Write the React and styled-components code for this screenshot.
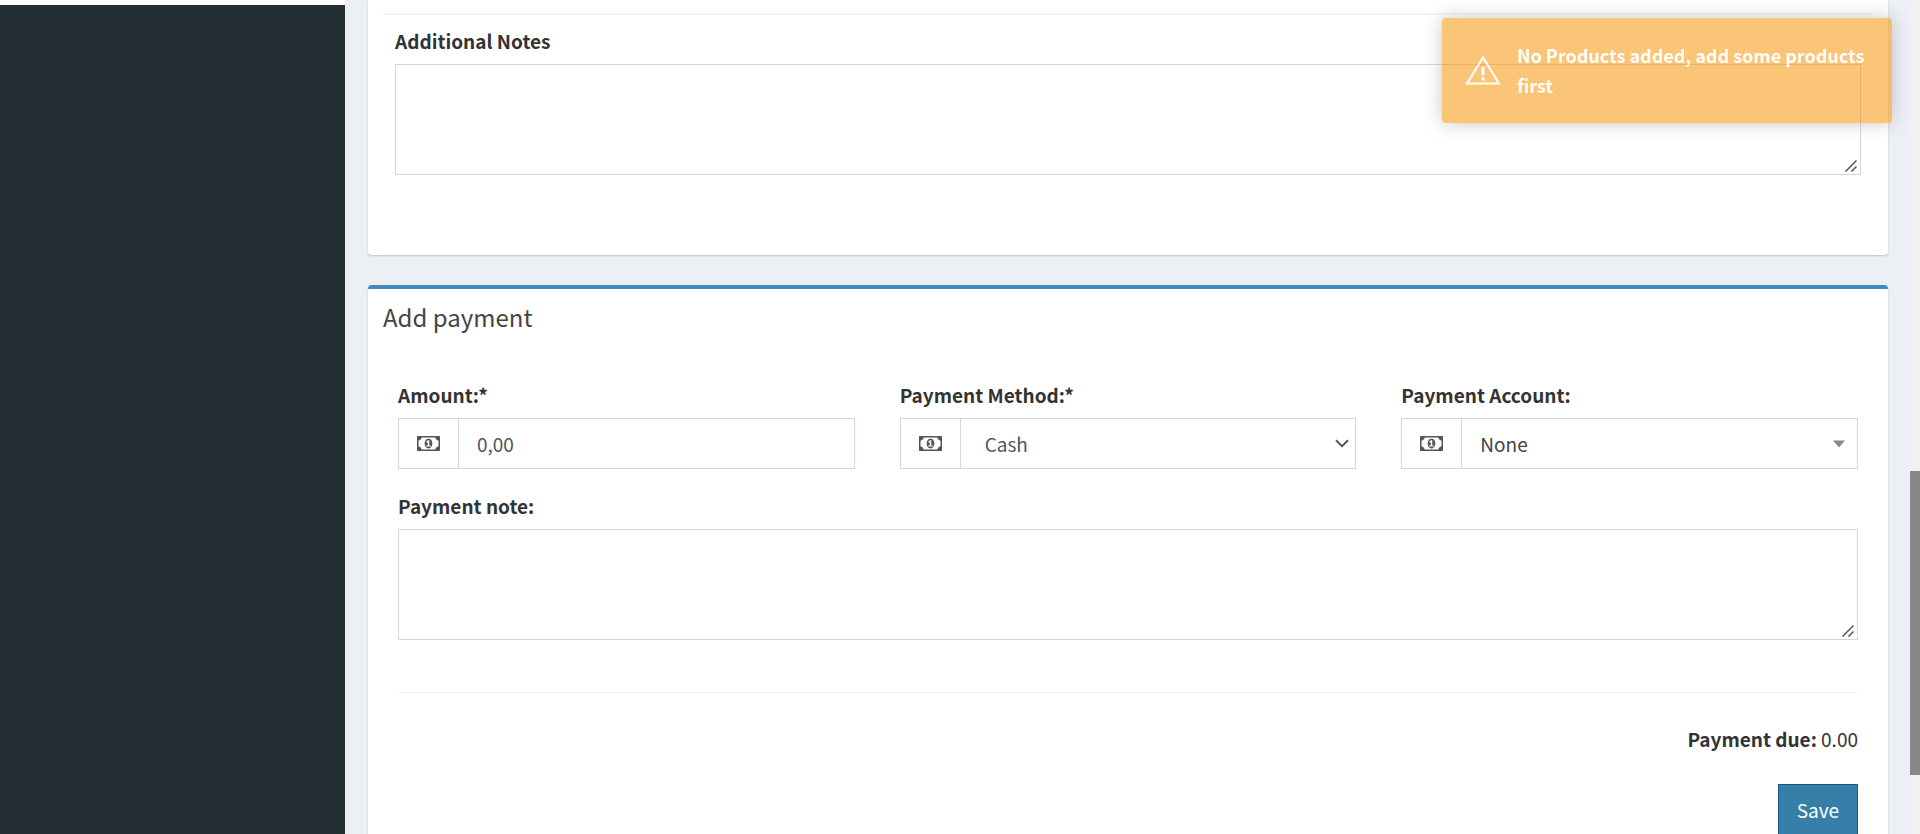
import React from "react";
import styled, { createGlobalStyle } from "styled-components";

const GlobalStyle = createGlobalStyle`
  *, *::before, *::after { box-sizing: border-box; }
  html, body { margin: 0; height: 100%; overflow: hidden; }
  #root { height: 100%; }
  body, button, input, select, textarea {
    font-family: "Noto Sans CJK SC", "Noto Sans", sans-serif;
    font-size: 19px;
    line-height: 28px;
    color: #333;
  }
`;

const Page = styled.div`
  display: flex;
  height: 100%;
  background: #ecf0f5;
`;

const Sidebar = styled.aside`
  flex: 0 0 345px;
  background: #222d32;
  border-top: 5px solid #fff;
`;

const Content = styled.main`
  flex: 1;
  min-width: 0;
  padding: 0 22px 0 23px;
  overflow: hidden;
  display: flex;
  flex-direction: column;
  gap: 30px;
`;

const Box = styled.section`
  flex: none;
  background: #fff;
  border-top: ${(p) => (p.$accent ? "4px solid #3c8dbc" : "0")};
  border-radius: ${(p) => (p.$accent ? "4px" : "0 0 4px 4px")};
  box-shadow: 0 1px 2px rgba(0, 0, 0, 0.2);
`;

const NotesBody = styled.div`
  margin: 0 15px;
  padding: 13px 0 80px;
`;

const NotesField = styled.div`
  border-top: 2px solid #f4f4f4;
  padding: 12px 12px 0;
`;

const Label = styled.label`
  display: block;
  font-weight: 700;
  margin-bottom: 9px;
`;

const TextAreaWrap = styled.div`
  position: relative;

  & > svg {
    position: absolute;
    right: 4px;
    bottom: 3px;
    pointer-events: none;
  }
`;

const TextArea = styled.textarea`
  display: block;
  width: 100%;
  height: 111px;
  padding: 9px 18px;
  border: 1px solid #d2d6de;
  background: #fff;
  outline: none;
  resize: vertical;

  &::-webkit-resizer { background: transparent; }
`;

const BoxTitle = styled.h3`
  margin: 0;
  padding: 13px 15px 15px;
  font-size: 24px;
  line-height: 30px;
  font-weight: 400;
  color: #444;
`;

const PaymentBody = styled.div`
  padding: 34px 30px 30px;
`;

const Columns = styled.div`
  display: grid;
  grid-template-columns: repeat(3, 1fr);
  column-gap: 45px;
  margin-bottom: 23px;
`;

const InputGroup = styled.div`
  display: flex;
  height: 51px;
  border: 1px solid #d2d6de;
`;

const Addon = styled.span`
  flex: 0 0 60px;
  display: grid;
  place-items: center;
  color: #555;
  border-right: 1px solid #d2d6de;
`;

const TextInput = styled.input`
  flex: 1;
  min-width: 0;
  padding: 0 18px;
  border: 0;
  outline: none;
  background: transparent;
  color: #555;
`;

const SelectWrap = styled.div`
  flex: 1;
  min-width: 0;
  display: grid;
  align-items: center;

  & > * { grid-area: 1 / 1; }
  & > svg { justify-self: end; margin-right: ${(p) => p.$arrowGap}px; pointer-events: none; }
`;

const Select = styled.select`
  appearance: none;
  width: 100%;
  height: 100%;
  padding: 0 ${(p) => p.$pad}px;
  border: 0;
  outline: none;
  background: transparent;
  color: ${(p) => p.$color};
`;

const Divider = styled.hr`
  margin: 52px 0 32px;
  border: 0;
  border-top: 1px solid #eee;
`;

const Due = styled.p`
  margin: 0 0 31px;
  text-align: right;
`;

const Actions = styled.div`
  display: flex;
  justify-content: flex-end;
`;

const SaveButton = styled.button`
  height: 51px;
  padding: 0 18px;
  border: 1px solid #1f567c;
  background: #367fa9;
  color: #fff;
`;

const ScrollTrack = styled.div`
  flex: 0 0 10px;
  display: flex;
  flex-direction: column;
  background: #f1f1f1;
`;

const ScrollSpace = styled.div`
  flex: ${(p) => p.$grow} 0 0;
`;

const ScrollThumb = styled.div`
  flex: 304 0 0;
  background: #888;
`;

const Toast = styled.div`
  position: fixed;
  top: 18px;
  right: 28px;
  width: 450px;
  padding: 22px 15px 23px 23px;
  display: flex;
  align-items: center;
  gap: 16px;
  border-radius: 4px;
  background: #f89406;
  box-shadow: 0 0 18px #999;
  color: #fff;
  font-size: 18px;
  line-height: 30px;
  font-weight: 700;
  opacity: 0.54;

  & > svg { flex: none; }
`;

const MoneyIcon = () => (
  <svg width="23" height="15" viewBox="0 0 1920 1280" preserveAspectRatio="none" fill="currentColor" aria-hidden="true">
    <path
      transform="matrix(1 0 0 -1 0 1280)"
      d="M768 384h384v96h-128v448h-114l-148 -137l77 -80q42 37 55 57h2v-288h-128v-96zM1280 640q0 -70 -21 -142t-59.5 -134t-101.5 -101t-138 -39t-138 39t-101.5 101t-59.5 134t-21 142t21 142t59.5 134t101.5 101t138 39t138 -39t101.5 -101t59.5 -134t21 -142zM1792 384v512q-106 0 -181 75t-75 181h-1152q0 -106 -75 -181t-181 -75v-512q106 0 181 -75t75 -181h1152q0 106 75 181t181 75zM1920 1216v-1152q0 -26 -19 -45t-45 -19h-1792q-26 0 -45 19t-19 45v1152q0 26 19 45t45 19h1792q26 0 45 -19t19 -45z"
    />
  </svg>
);

const Chevron = () => (
  <svg width="14" height="9" viewBox="0 0 14 9" fill="none" stroke="#555" strokeWidth="2" aria-hidden="true">
    <path d="M1 1.2 7 7.2 13 1.2" />
  </svg>
);

const Caret = () => (
  <svg width="12" height="8" viewBox="0 0 12 8" fill="#888" aria-hidden="true">
    <path d="M0 0.5H12L6 7.5Z" />
  </svg>
);

const ResizeGrip = () => (
  <svg width="12" height="12" viewBox="0 0 12 12" fill="none" stroke="#555" strokeWidth="1.5" aria-hidden="true">
    <path d="M0.5 11.5 11.5 0.5M6.5 11.5 11.5 6.5" />
  </svg>
);

const WarningIcon = () => (
  <svg width="36" height="30" viewBox="0 0 36 30" fill="none" stroke="#fff" aria-hidden="true">
    <path d="M18 2.5 34 28.5H2Z" strokeWidth="2" />
    <path d="M18 13v6" strokeWidth="3.2" strokeLinecap="round" />
    <circle cx="18" cy="24" r="1.8" fill="#fff" stroke="none" />
  </svg>
);

const NoteArea = ({ id }) => (
  <TextAreaWrap>
    <TextArea id={id} />
    <ResizeGrip />
  </TextAreaWrap>
);

export default function App() {
  return (
    <>
      <GlobalStyle />
      <Page>
        <Sidebar />
        <Content>
          <Box>
            <NotesBody>
              <NotesField>
                <Label htmlFor="additional-notes">Additional Notes</Label>
                <NoteArea id="additional-notes" />
              </NotesField>
            </NotesBody>
          </Box>
          <Box $accent>
            <BoxTitle>Add payment</BoxTitle>
            <PaymentBody>
              <Columns>
                <div>
                  <Label htmlFor="amount">Amount:*</Label>
                  <InputGroup>
                    <Addon><MoneyIcon /></Addon>
                    <TextInput id="amount" type="text" defaultValue="0,00" />
                  </InputGroup>
                </div>
                <div>
                  <Label htmlFor="method">Payment Method:*</Label>
                  <InputGroup>
                    <Addon><MoneyIcon /></Addon>
                    <SelectWrap $arrowGap={6}>
                      <Select id="method" $pad={24} $color="#555">
                        <option>Cash</option>
                      </Select>
                      <Chevron />
                    </SelectWrap>
                  </InputGroup>
                </div>
                <div>
                  <Label htmlFor="account">Payment Account:</Label>
                  <InputGroup>
                    <Addon><MoneyIcon /></Addon>
                    <SelectWrap $arrowGap={12}>
                      <Select id="account" $pad={18} $color="#444">
                        <option>None</option>
                      </Select>
                      <Caret />
                    </SelectWrap>
                  </InputGroup>
                </div>
              </Columns>
              <Label htmlFor="payment-note">Payment note:</Label>
              <NoteArea id="payment-note" />
              <Divider />
              <Due><strong>Payment due:</strong> 0.00</Due>
              <Actions>
                <SaveButton type="button">Save</SaveButton>
              </Actions>
            </PaymentBody>
          </Box>
        </Content>
        <ScrollTrack aria-hidden="true">
          <ScrollSpace $grow={471} />
          <ScrollThumb />
          <ScrollSpace $grow={59} />
        </ScrollTrack>
      </Page>
      <Toast role="alert">
        <WarningIcon />
        <span>No Products added, add some products first</span>
      </Toast>
    </>
  );
}
